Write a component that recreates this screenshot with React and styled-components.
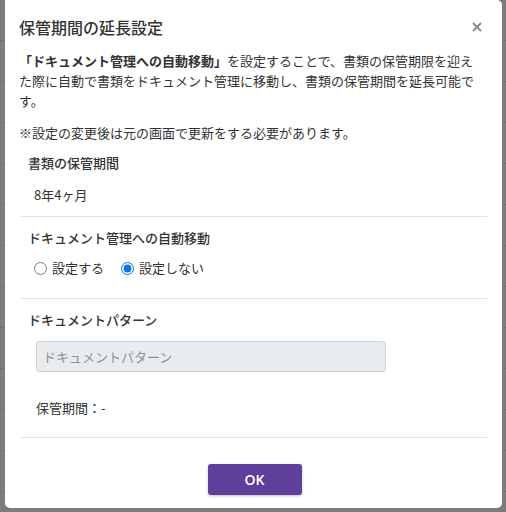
import React from "react";
import styled, { createGlobalStyle } from "styled-components";

const Global = createGlobalStyle`
  html, body { margin: 0; padding: 0; }
  body {
    background: #7c7c7c;
    font-family: "Noto Sans CJK JP", "Noto Sans", sans-serif;
    color: #333;
    overflow: hidden;
  }
`;

const Page = styled.div`
  position: relative;
  width: 506px;
  height: 512px;
  overflow: hidden;
  background:
    repeating-linear-gradient(
      to bottom,
      transparent 0px,
      transparent 40px,
      #6f6f6f 40px,
      #6f6f6f 41px
    );
`;

const Overlay = styled.div`
  display: flex;
  padding: 0 4px 0 5px;
  height: 512px;
  box-sizing: border-box;
`;

const Modal = styled.div`
  width: 497px;
  height: 508px;
  background: #fff;
  border-radius: 0 5px 5px 5px;
  box-sizing: border-box;
  padding: 15px 15px 13px 14px;
  display: flex;
  flex-direction: column;
`;

const Header = styled.div`
  display: flex;
  align-items: center;
  justify-content: space-between;
  height: 24px;
`;

const Title = styled.h1`
  margin: 0;
  font-size: 16px;
  font-weight: 500;
  line-height: 24px;
  color: #333;
`;

const Close = styled.button`
  border: none;
  background: none;
  padding: 0;
  margin-right: 3px;
  width: 14px;
  height: 14px;
  display: flex;
  align-items: center;
  justify-content: center;
  cursor: pointer;
`;

const Lead = styled.p`
  margin: 12px 0 0;
  width: 466px;
  font-size: 13px;
  line-height: 20px;
  color: #333;
  b { font-weight: 700; }
`;

const Note = styled.p`
  margin: 12px 0 0;
  font-size: 13px;
  line-height: 20px;
  color: #333;
`;

const Section = styled.div`
  padding: ${(p) => p.$pad || "0"};
  display: flex;
  flex-direction: column;
`;

const SectionTitle = styled.div`
  margin-left: 9px;
  font-size: 13px;
  font-weight: 500;
  line-height: 20px;
  color: #333;
`;

const Value = styled.div`
  margin: ${(p) => p.$m || "12px 0 0 15px"};
  font-size: 13px;
  line-height: 20px;
  color: #333;
`;

const Divider = styled.hr`
  margin: ${(p) => p.$m || "11px 0 0"};
  margin-left: 2px;
  width: 466px;
  border: none;
  border-top: 1px solid #e3e3e3;
  height: 0;
`;

const RadioRow = styled.div`
  display: flex;
  align-items: center;
  margin: 10px 0 0 15px;
  height: 20px;
  gap: 17px;
`;

const RadioLabel = styled.label`
  display: flex;
  align-items: center;
  gap: 5px;
  font-size: 13px;
  line-height: 20px;
  color: #333;
  input {
    margin: 0;
    width: 13px;
    height: 13px;
    accent-color: #0b74e5;
  }
`;

const Input = styled.input`
  margin: 11px 0 0 17px;
  width: 350px;
  height: 31px;
  box-sizing: border-box;
  border: 1px solid #ced4da;
  border-radius: 3px;
  background: #e9ecef;
  padding: 0 6px;
  font-family: inherit;
  font-size: 13px;
  color: #333;
  &::placeholder { color: #8e9297; }
`;

const Footer = styled.div`
  display: flex;
  justify-content: center;
  margin-top: 26px;
`;

const OkButton = styled.button`
  width: 94px;
  height: 31px;
  border: none;
  border-radius: 3px;
  background: #5e3f9c;
  color: #fff;
  font-family: "Open Sans", "Noto Sans", sans-serif;
  font-size: 14px;
  font-weight: 600;
  box-shadow: 0 1px 3px rgba(0, 0, 0, 0.25);
  margin-left: 3px;
  cursor: pointer;
`;

export default function App() {
  return (
    <Page>
      <Global />
      <Overlay>
        <Modal>
          <Header>
            <Title>保管期間の延長設定</Title>
            <Close aria-label="close">
              <svg width="10" height="10" viewBox="0 0 10 10">
                <path d="M1 1 L9 9 M9 1 L1 9" stroke="#8a8a8a" strokeWidth="2" />
              </svg>
            </Close>
          </Header>
          <Lead>
            <b>「ドキュメント管理への自動移動」</b>を設定することで、書類の保管期限を迎えた際に自動で書類をドキュメント管理に移動し、書類の保管期間を延長可能です。
          </Lead>
          <Note>※設定の変更後は元の画面で更新をする必要があります。</Note>
          <Section $pad="10px 0 0">
            <SectionTitle>書類の保管期間</SectionTitle>
            <Value>8年4ヶ月</Value>
          </Section>
          <Divider />
          <Section $pad="11px 0 0">
            <SectionTitle>ドキュメント管理への自動移動</SectionTitle>
            <RadioRow>
              <RadioLabel>
                <input type="radio" name="auto" />
                設定する
              </RadioLabel>
              <RadioLabel>
                <input type="radio" name="auto" defaultChecked />
                設定しない
              </RadioLabel>
            </RadioRow>
          </Section>
          <Divider $m="20px 0 0" />
          <Section $pad="11px 0 0">
            <SectionTitle>ドキュメントパターン</SectionTitle>
            <Input placeholder="ドキュメントパターン" disabled />
            <Value $m="26px 0 0 17px">保管期間：-</Value>
          </Section>
          <Divider $m="19px 0 0" />
          <Footer>
            <OkButton>OK</OkButton>
          </Footer>
        </Modal>
      </Overlay>
    </Page>
  );
}
